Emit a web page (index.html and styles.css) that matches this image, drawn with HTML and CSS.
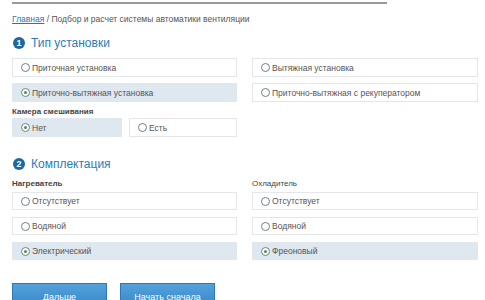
FILE: index.html
```html
<!DOCTYPE html>
<html lang="ru">
<head>
<meta charset="UTF-8">
<title>Подбор и расчет системы автоматики вентиляции</title>
<link rel="stylesheet" href="styles.css">
</head>
<body>
<div class="page">
    <div class="top-line"></div>
    <div class="breadcrumbs"><a href="#">Главная</a> / Подбор и расчет системы автоматики вентиляции</div>

    <h2 class="step"><span class="step-num">1</span>Тип установки</h2>
    <div class="options">
        <label class="option"><span class="radio"></span>Приточная установка</label>
        <label class="option"><span class="radio"></span>Вытяжная установка</label>
        <label class="option checked"><span class="radio"></span>Приточно-вытяжная установка</label>
        <label class="option"><span class="radio"></span>Приточно-вытяжная с рекуператором</label>
    </div>
    <div class="field-title">Камера смешивания</div>
    <div class="pair">
        <label class="option checked"><span class="radio"></span>Нет</label>
        <label class="option"><span class="radio"></span>Есть</label>
    </div>

    <h2 class="step step-2"><span class="step-num">2</span>Комплектация</h2>
    <div class="columns">
        <div class="col">
            <div class="field-title">Нагреватель</div>
            <label class="option"><span class="radio"></span>Отсутствует</label>
            <label class="option"><span class="radio"></span>Водяной</label>
            <label class="option checked"><span class="radio"></span>Электрический</label>
        </div>
        <div class="col">
            <div class="field-title light">Охладитель</div>
            <label class="option"><span class="radio"></span>Отсутствует</label>
            <label class="option"><span class="radio"></span>Водяной</label>
            <label class="option checked"><span class="radio"></span>Фреоновый</label>
        </div>
    </div>

    <div class="buttons">
        <button class="btn">Дальше</button>
        <button class="btn">Начать сначала</button>
    </div>
</div>
</body>
</html>
```

FILE: styles.css
```css
body {
    margin: 0;
    padding: 0;
    background: #fff;
    font-family: "Liberation Sans", Arial, sans-serif;
    color: #555;
    overflow: hidden;
}

.page {
    padding: 2px 7px 0 12px;
}

.top-line {
    width: 375px;
    height: 2px;
    background: #9a9a9a;
}

.breadcrumbs {
    margin-top: 9px;
    font-size: 8.5px;
    line-height: 12px;
    color: #555;
}

.breadcrumbs a {
    color: #2a76b0;
}

.step {
    display: flex;
    align-items: center;
    margin: 11px 0 0;
    height: 14px;
    font-size: 12px;
    font-weight: normal;
    color: #2a7cb8;
}

.step-2 {
    margin-top: 20px;
}

.step-num {
    width: 12px;
    height: 12px;
    margin: 0 6px 0 1px;
    border-radius: 50%;
    background: #1f67a3;
    color: #fff;
    font-size: 9px;
    font-weight: bold;
    line-height: 12px;
    text-align: center;
}

.options {
    display: grid;
    grid-template-columns: 225px 226px;
    column-gap: 15px;
    row-gap: 6px;
    margin-top: 8px;
}

.option {
    display: flex;
    align-items: center;
    box-sizing: border-box;
    height: 19px;
    padding-left: 8px;
    border: 1px solid #e4e6e8;
    background: #fff;
    font-size: 8.5px;
    color: #555;
}

.option.checked {
    background: #dfe7ef;
    border-color: #dfe7ef;
}

.radio {
    position: relative;
    box-sizing: border-box;
    width: 9px;
    height: 9px;
    margin-right: 2px;
    border: 1px solid #6f7f8c;
    border-radius: 50%;
    background: #fff;
}

.option.checked .radio::after {
    content: "";
    position: absolute;
    left: 2px;
    top: 2px;
    width: 3px;
    height: 3px;
    border-radius: 50%;
    background: #3f9a3c;
}

.field-title {
    margin-top: 4px;
    font-size: 8px;
    line-height: 12px;
    font-weight: bold;
    color: #444;
}

.field-title.light {
    font-weight: normal;
}

.pair {
    display: grid;
    grid-template-columns: 110px 108px;
    column-gap: 7px;
    margin-top: 0;
}

.columns {
    display: grid;
    grid-template-columns: 225px 226px;
    column-gap: 15px;
    margin-top: 7px;
}

.col {
    display: flex;
    flex-direction: column;
    gap: 7px;
}

.col .option {
    height: 18px;
}

.col .field-title {
    margin: 0 0 -5px;
}

.buttons {
    display: flex;
    gap: 13px;
    margin-top: 23px;
}

.btn {
    width: 95px;
    height: 28px;
    padding: 0;
    border: 1px solid #2f78b3;
    background: linear-gradient(#54a2dc, #3282c4);
    color: #fff;
    font-family: "Liberation Sans", Arial, sans-serif;
    font-size: 9px;
    cursor: pointer;
}
```
